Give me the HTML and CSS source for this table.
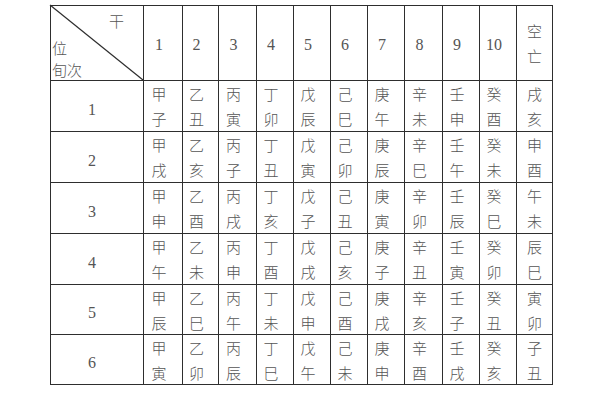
FILE: index.html
```html
<!DOCTYPE html>
<html lang="zh">
<head>
<meta charset="utf-8">
<title>六十甲子旬空表</title>
<link rel="stylesheet" href="styles.css">
</head>
<body>
<div class="table">
  <div class="cell corner">
    <svg class="diag" viewBox="0 0 100 100" preserveAspectRatio="none"><line x1="0" y1="0" x2="100" y2="100" vector-effect="non-scaling-stroke"/></svg>
    <span class="gan">干</span>
    <span class="wei">位</span>
    <span class="xun">旬次</span>
  </div>
  <div class="cell num">1</div><div class="cell num">2</div><div class="cell num">3</div><div class="cell num">4</div><div class="cell num">5</div><div class="cell num">6</div><div class="cell num">7</div><div class="cell num">8</div><div class="cell num">9</div><div class="cell num">10</div>
  <div class="cell last two">空<br>亡</div>

  <div class="cell idx">1</div>
  <div class="cell two">甲<br>子</div><div class="cell two">乙<br>丑</div><div class="cell two">丙<br>寅</div><div class="cell two">丁<br>卯</div><div class="cell two">戊<br>辰</div><div class="cell two">己<br>巳</div><div class="cell two">庚<br>午</div><div class="cell two">辛<br>未</div><div class="cell two">壬<br>申</div><div class="cell two">癸<br>酉</div><div class="cell two last">戌<br>亥</div>

  <div class="cell idx">2</div>
  <div class="cell two">甲<br>戌</div><div class="cell two">乙<br>亥</div><div class="cell two">丙<br>子</div><div class="cell two">丁<br>丑</div><div class="cell two">戊<br>寅</div><div class="cell two">己<br>卯</div><div class="cell two">庚<br>辰</div><div class="cell two">辛<br>巳</div><div class="cell two">壬<br>午</div><div class="cell two">癸<br>未</div><div class="cell two last">申<br>酉</div>

  <div class="cell idx">3</div>
  <div class="cell two">甲<br>申</div><div class="cell two">乙<br>酉</div><div class="cell two">丙<br>戌</div><div class="cell two">丁<br>亥</div><div class="cell two">戊<br>子</div><div class="cell two">己<br>丑</div><div class="cell two">庚<br>寅</div><div class="cell two">辛<br>卯</div><div class="cell two">壬<br>辰</div><div class="cell two">癸<br>巳</div><div class="cell two last">午<br>未</div>

  <div class="cell idx">4</div>
  <div class="cell two">甲<br>午</div><div class="cell two">乙<br>未</div><div class="cell two">丙<br>申</div><div class="cell two">丁<br>酉</div><div class="cell two">戊<br>戌</div><div class="cell two">己<br>亥</div><div class="cell two">庚<br>子</div><div class="cell two">辛<br>丑</div><div class="cell two">壬<br>寅</div><div class="cell two">癸<br>卯</div><div class="cell two last">辰<br>巳</div>

  <div class="cell idx">5</div>
  <div class="cell two">甲<br>辰</div><div class="cell two">乙<br>巳</div><div class="cell two">丙<br>午</div><div class="cell two">丁<br>未</div><div class="cell two">戊<br>申</div><div class="cell two">己<br>酉</div><div class="cell two">庚<br>戌</div><div class="cell two">辛<br>亥</div><div class="cell two">壬<br>子</div><div class="cell two">癸<br>丑</div><div class="cell two last">寅<br>卯</div>

  <div class="cell idx">6</div>
  <div class="cell two">甲<br>寅</div><div class="cell two">乙<br>卯</div><div class="cell two">丙<br>辰</div><div class="cell two">丁<br>巳</div><div class="cell two">戊<br>午</div><div class="cell two">己<br>未</div><div class="cell two">庚<br>申</div><div class="cell two">辛<br>酉</div><div class="cell two">壬<br>戌</div><div class="cell two">癸<br>亥</div><div class="cell two last">子<br>丑</div>
</div>
</body>
</html>
```

FILE: styles.css
```css
html, body {
  margin: 0;
  padding: 0;
  background: #ffffff;
}
body {
  padding: 5px 0 0 50px;
  font-family: "Liberation Serif", "Noto Sans CJK SC", serif;
  font-size: 15px;
  font-weight: 300;
  color: #555555;
}
.table {
  display: grid;
  grid-template-columns: 92px 38px 35px 37px 36px 36px 36px 36px 37px 36px 36px 35px;
  grid-template-rows: 74px 50px 50px 50px 50px 49px 49px;
  gap: 1px;
  width: max-content;
  background: #2e2e2e;
  border: 1px solid #2e2e2e;
}
.cell {
  background: #ffffff;
  display: flex;
  align-items: center;
  justify-content: center;
  text-align: center;
  padding: 0 13px 0 5px;
  line-height: 25px;
}
.two {
  padding-top: 4px;
}
.num {
  padding-top: 2px;
  font-size: 16px;
}
.last {
  padding: 4px 8px 0 8px;
}
.idx {
  padding: 6px 10px 0 0;
  font-size: 16px;
}
.corner {
  position: relative;
  display: flex;
  flex-direction: column;
  align-items: flex-start;
  justify-content: flex-start;
  padding: 0;
  line-height: 22px;
}
.diag {
  position: absolute;
  left: -1px;
  top: -1px;
  width: calc(100% + 1px);
  height: calc(100% + 1px);
  overflow: visible;
}
.diag line {
  stroke: #2e2e2e;
  stroke-width: 1.2;
}
.gan {
  align-self: flex-end;
  margin: 5px 19px 5px 0;
}
.wei, .xun {
  margin-left: 1px;
}
```
